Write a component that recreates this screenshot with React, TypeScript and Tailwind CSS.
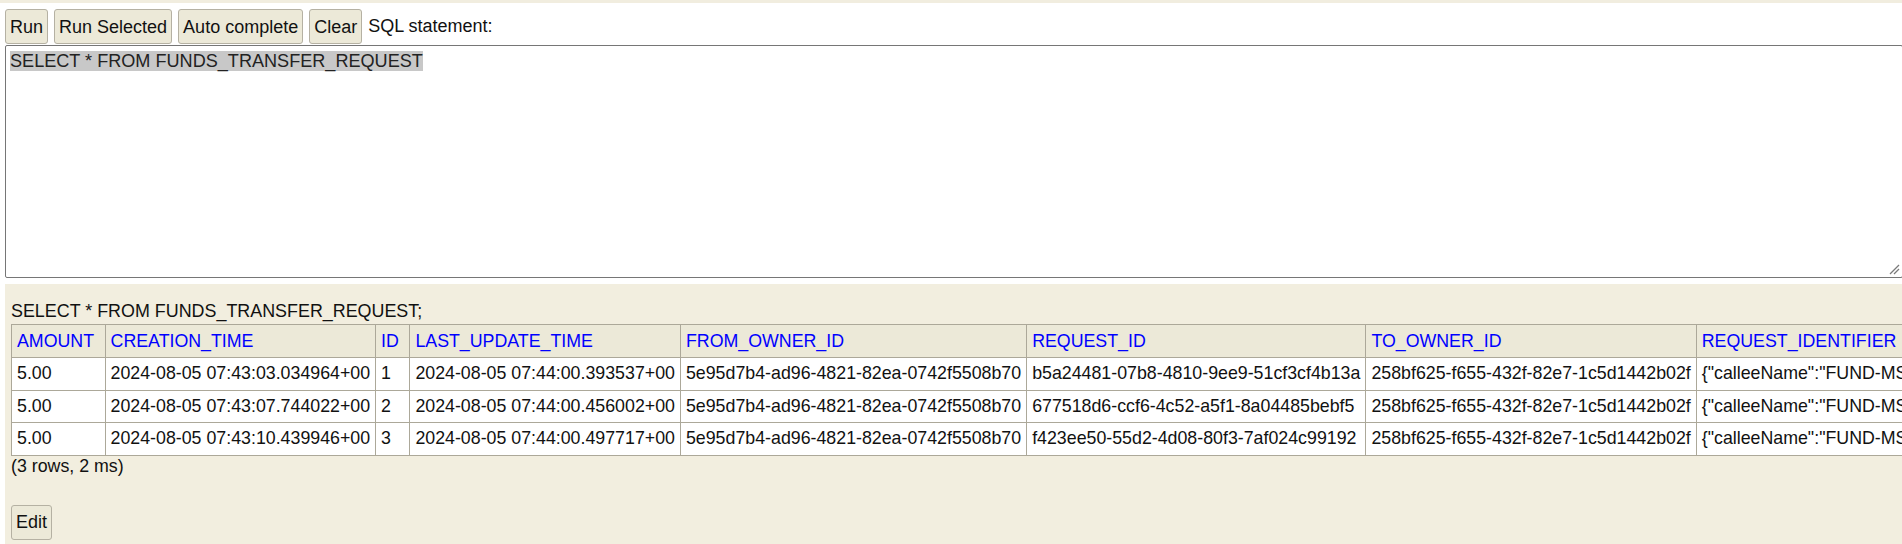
import React from 'react'

const columns = [
  'AMOUNT',
  'CREATION_TIME',
  'ID',
  'LAST_UPDATE_TIME',
  'FROM_OWNER_ID',
  'REQUEST_ID',
  'TO_OWNER_ID',
  'REQUEST_IDENTIFIER',
]

const rows = [
  [
    '5.00',
    '2024-08-05 07:43:03.034964+00',
    '1',
    '2024-08-05 07:44:00.393537+00',
    '5e95d7b4-ad96-4821-82ea-0742f5508b70',
    'b5a24481-07b8-4810-9ee9-51cf3cf4b13a',
    '258bf625-f655-432f-82e7-1c5d1442b02f',
    '{"calleeName":"FUND-MS","callerName":"PAYMENT-MS","requestId":"b5a24481"}',
  ],
  [
    '5.00',
    '2024-08-05 07:43:07.744022+00',
    '2',
    '2024-08-05 07:44:00.456002+00',
    '5e95d7b4-ad96-4821-82ea-0742f5508b70',
    '677518d6-ccf6-4c52-a5f1-8a04485bebf5',
    '258bf625-f655-432f-82e7-1c5d1442b02f',
    '{"calleeName":"FUND-MS","callerName":"PAYMENT-MS","requestId":"677518d6"}',
  ],
  [
    '5.00',
    '2024-08-05 07:43:10.439946+00',
    '3',
    '2024-08-05 07:44:00.497717+00',
    '5e95d7b4-ad96-4821-82ea-0742f5508b70',
    'f423ee50-55d2-4d08-80f3-7af024c99192',
    '258bf625-f655-432f-82e7-1c5d1442b02f',
    '{"calleeName":"FUND-MS","callerName":"PAYMENT-MS","requestId":"f423ee50"}',
  ],
]

function ToolButton({ label }: { label: string }) {
  return (
    <button className="h-[35px] px-[4px] rounded-[3px] border border-[#b5b1a3] bg-[#ece9d8] text-[18px] text-[#111] leading-none">
      {label}
    </button>
  )
}

export default function App() {
  return (
    <div className="w-[1902px] h-[544px] overflow-hidden bg-white font-['Liberation_Sans',Arial,sans-serif] text-black">
      <div className="h-[3px] bg-[#f1eddf]" />

      {/* query frame */}
      <div className="pl-[5px] pt-[6px]">
        <div className="flex items-center gap-[6px] h-[35px]">
          <ToolButton label="Run" />
          <ToolButton label="Run Selected" />
          <ToolButton label="Auto complete" />
          <ToolButton label="Clear" />
          <span className="text-[18px] text-[#111]">SQL statement:</span>
        </div>
        <div className="relative mt-px w-[1898px] h-[233px] border border-[#767676] rounded-[2px] bg-white pl-[4px] pt-[3px] text-[18.1px] leading-[24px]">
          <span className="bg-[#c8c8c8] text-[#222]">SELECT * FROM FUNDS_TRANSFER_REQUEST</span>
          <svg
            className="absolute right-[2px] bottom-[2px]"
            width="11"
            height="11"
            viewBox="0 0 11 11"
          >
            <line x1="1" y1="10" x2="10" y2="1" stroke="#7a7a7a" strokeWidth="1.2" />
            <line x1="5" y1="10" x2="10" y2="5" stroke="#7a7a7a" strokeWidth="1.2" />
          </svg>
        </div>
      </div>

      {/* result frame */}
      <div className="ml-[5px] mt-[6px] h-[300px] bg-[#f2eedf] pl-[6px] pt-[17px] text-[17.8px] text-[#111]">
        <div className="leading-[21px] text-[17.9px]">SELECT * FROM FUNDS_TRANSFER_REQUEST;</div>
        <table className="mt-[2px] border-collapse border border-[#aca899] whitespace-nowrap">
          <thead>
            <tr className="h-[33px]">
              {columns.map((c) => (
                <th
                  key={c}
                  className="border border-[#aca899] bg-[#ece9d8] pl-[5px] pr-[10.5px] text-left font-normal text-[#0000ff]"
                >
                  {c}
                </th>
              ))}
            </tr>
          </thead>
          <tbody>
            {rows.map((r, i) => (
              <tr key={i} className="h-[32.5px]">
                {r.map((v, j) => (
                  <td key={j} className="border border-[#aca899] bg-white px-[5px]">
                    {v}
                  </td>
                ))}
              </tr>
            ))}
          </tbody>
        </table>
        <div className="leading-[21px]">(3 rows, 2 ms)</div>
        <button className="mt-[28px] h-[35px] px-[4px] rounded-[3px] border border-[#b5b1a3] bg-[#ece9d8] text-[18px] text-[#111] leading-none">
          Edit
        </button>
      </div>
    </div>
  )
}
